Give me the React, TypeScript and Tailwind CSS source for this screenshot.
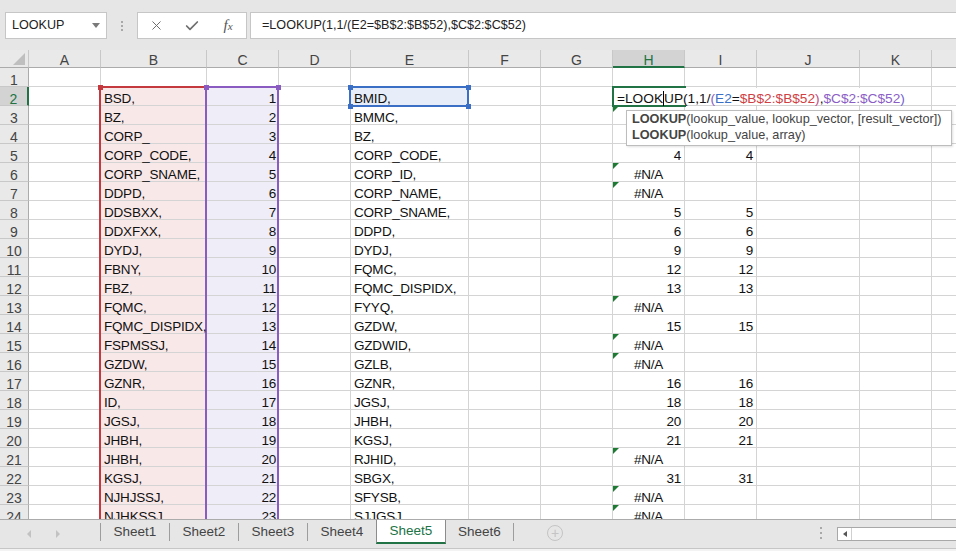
import { Check, X } from 'lucide-react';

const COLS = [
  { key: 'A', w: 'w-[72px]' },
  { key: 'B', w: 'w-[106px]' },
  { key: 'C', w: 'w-[72px]' },
  { key: 'D', w: 'w-[72px]' },
  { key: 'E', w: 'w-[118px]' },
  { key: 'F', w: 'w-[72px]' },
  { key: 'G', w: 'w-[72px]' },
  { key: 'H', w: 'w-[72px]' },
  { key: 'I', w: 'w-[72px]' },
  { key: 'J', w: 'w-[103px]' },
  { key: 'K', w: 'w-[72px]' },
  { key: 'L', w: 'w-[72px]' },
];

const COL_B = [
  'BSD,', 'BZ,', 'CORP_', 'CORP_CODE,', 'CORP_SNAME,', 'DDPD,', 'DDSBXX,', 'DDXFXX,', 'DYDJ,', 'FBNY,', 'FBZ,', 'FQMC,',
  'FQMC_DISPIDX,', 'FSPMSSJ,', 'GZDW,', 'GZNR,', 'ID,', 'JGSJ,', 'JHBH,', 'JHBH,', 'KGSJ,', 'NJHJSSJ,', 'NJHKSSJ,',
];

const COL_E = [
  'BMID,', 'BMMC,', 'BZ,', 'CORP_CODE,', 'CORP_ID,', 'CORP_NAME,', 'CORP_SNAME,', 'DDPD,', 'DYDJ,', 'FQMC,', 'FQMC_DISPIDX,',
  'FYYQ,', 'GZDW,', 'GZDWID,', 'GZLB,', 'GZNR,', 'JGSJ,', 'JHBH,', 'KGSJ,', 'RJHID,', 'SBGX,', 'SFYSB,', 'SJJGSJ,',
];

// index 0 = row 2 (the formula cell); null = #N/A
const COL_H: (number | null)[] = [
  0, null, 2, 4, null, null, 5, 6, 9, 12, 13, null, 15, null, null, 16, 18, 20, 21, null, 31, null, null,
];

const SHEETS = ['Sheet1', 'Sheet2', 'Sheet3', 'Sheet4', 'Sheet5', 'Sheet6'];

function FormulaText() {
  return (
    <>
      <span>=LOOK</span>
      <span className="inline-block h-[15px] w-0 border-l border-black align-[-3px]" />
      <span>UP(1,1/</span>
      <span className="text-[#8b5ec6]">(</span>
      <span className="text-[#3a6fc6]">E2</span>
      <span>=</span>
      <span className="text-[#cf3f45]">$B$2:$B$52</span>
      <span className="text-[#c04a86]">)</span>
      <span>,</span>
      <span className="text-[#8b5ec6]">$C$2:$C$52</span>
      <span className="text-[#6f5fd2]">)</span>
    </>
  );
}

function ColHeader() {
  return (
    <div className="flex h-[18px] shrink-0 bg-[#e9e9e9]">
      <div className="flex h-[18px] w-[29px] shrink-0 items-end justify-end border-r border-b border-r-[#c8c8c8] border-b-[#ababab] pr-[3px] pb-[2px]">
        <div className="h-0 w-0 border-b-[12px] border-l-[12px] border-b-[#bfbfbf] border-l-transparent" />
      </div>
      {COLS.map((c) => {
        const active = c.key === 'H';
        return (
          <div
            key={c.key}
            className={`${c.w} h-[18px] shrink-0 border-r border-r-[#c8c8c8] pt-[4px] text-center text-[14px] leading-[13px] ${
              active
                ? 'border-b-2 border-b-[#217346] bg-[#d3d3d3] text-[#217346]'
                : 'border-b border-b-[#ababab] text-[#444]'
            }`}
          >
            {c.key}
          </div>
        );
      })}
    </div>
  );
}

function ErrorMark() {
  return <div className="absolute top-0 left-0 h-0 w-0 border-t-[6px] border-r-[6px] border-t-[#1c7a32] border-r-transparent" />;
}

function Txt({ children }: { children: React.ReactNode }) {
  return <span className="relative z-[1]">{children}</span>;
}

function Row({ r }: { r: number }) {
  const i = r - 2;
  const hasData = r >= 2;
  const h = hasData ? COL_H[i] : undefined;
  const base = 'relative h-[19px] shrink-0 whitespace-nowrap border-r border-b border-[#d4d4d4] pt-[5px] text-[13.5px] leading-[13px] tracking-[-0.2px] text-[#111]';

  return (
    <div className="flex h-[19px] shrink-0">
      <div
        className={`h-[19px] w-[29px] shrink-0 border-b border-b-[#c8c8c8] pt-[6px] text-center text-[14px] leading-[13px] ${
          r === 2
            ? 'border-r-2 border-r-[#217346] bg-[#d3d3d3] text-[#217346]'
            : 'border-r border-r-[#ababab] bg-[#e9e9e9] text-[#444]'
        }`}
      >
        {r}
      </div>
      {COLS.map((c) => {
        if (!hasData) return <div key={c.key} className={`${c.w} ${base}`} />;
        if (c.key === 'B')
          return (
            <div key={c.key} className={`${c.w} ${base} bg-[#f9e8e8] pl-[3px]`}>
              <Txt>{COL_B[i]}</Txt>
            </div>
          );
        if (c.key === 'C')
          return (
            <div key={c.key} className={`${c.w} ${base} bg-[#efedf8] pr-[2px] text-right`}>
              <Txt>{r - 1}</Txt>
            </div>
          );
        if (c.key === 'E')
          return (
            <div key={c.key} className={`${c.w} ${base} pl-[3px] ${r === 2 ? 'bg-[#e8eef9]' : ''}`}>
              <Txt>{COL_E[i]}</Txt>
            </div>
          );
        if (c.key === 'H') {
          if (r === 2)
            return (
              <div key={c.key} className={`${c.w} ${base} z-10`}>
                <div className="absolute -top-[1px] -left-[1px] h-[21px] w-[74px] border-2 border-[#217346]" />
                <div className="absolute top-[1px] left-[2px] h-[17px] bg-white pt-[3px] pr-[6px] pl-[2px] text-[13.7px] leading-[13px] tracking-normal">
                  <FormulaText />
                </div>
              </div>
            );
          if (h === null)
            return (
              <div key={c.key} className={`${c.w} ${base} text-center`}>
                <ErrorMark />
                #N/A
              </div>
            );
          return (
            <div key={c.key} className={`${c.w} ${base} pr-[3px] text-right`}>
              {h}
            </div>
          );
        }
        if (c.key === 'I')
          return (
            <div key={c.key} className={`${c.w} ${base} pr-[3px] text-right`}>
              {r > 2 && h !== null ? h : ''}
            </div>
          );
        return <div key={c.key} className={`${c.w} ${base}`} />;
      })}
    </div>
  );
}

function RangeMarks() {
  return (
    <>
      {/* B2:B52 */}
      <div className="absolute top-[36px] left-[99px] h-[2px] w-[107px] bg-[#c4393d]" />
      <div className="absolute top-[36px] left-[99px] h-[440px] w-[2px] bg-[#c4393d]" />
      <div className="absolute top-[35px] left-[98px] h-[5px] w-[5px] bg-[#c4393d]" />
      {/* C2:C52 */}
      <div className="absolute top-[36px] left-[205px] h-[2px] w-[74px] bg-[#8a5cc2]" />
      <div className="absolute top-[36px] left-[205px] h-[440px] w-[2px] bg-[#8a5cc2]" />
      <div className="absolute top-[36px] left-[277px] h-[440px] w-[2px] bg-[#8a5cc2]" />
      <div className="absolute top-[35px] left-[204px] h-[5px] w-[5px] bg-[#8a5cc2]" />
      <div className="absolute top-[35px] left-[276px] h-[5px] w-[5px] bg-[#8a5cc2]" />
      {/* E2 */}
      <div className="absolute top-[36px] left-[349px] h-[21px] w-[120px] border-2 border-[#3b6fc6]" />
      <div className="absolute top-[35px] left-[348px] h-[5px] w-[5px] bg-[#3b6fc6]" />
      <div className="absolute top-[35px] left-[466px] h-[5px] w-[5px] bg-[#3b6fc6]" />
      <div className="absolute top-[54px] left-[348px] h-[5px] w-[5px] bg-[#3b6fc6]" />
      <div className="absolute top-[54px] left-[466px] h-[5px] w-[5px] bg-[#3b6fc6]" />
    </>
  );
}

function Tooltip() {
  return (
    <div className="absolute top-[60px] left-[626px] z-30 h-[36px] w-[326px] border border-[#bdbdbd] bg-white px-[5px] text-[12.7px] leading-[16px] text-[#444] shadow-[1px_1px_2px_rgba(0,0,0,0.12)]">
      <div className="whitespace-nowrap">
        <span className="font-bold">LOOKUP</span>(lookup_value, lookup_vector, [result_vector])
      </div>
      <div className="whitespace-nowrap">
        <span className="font-bold">LOOKUP</span>(lookup_value, array)
      </div>
    </div>
  );
}

function TopBar() {
  return (
    <div className="flex h-[50px] shrink-0 items-start bg-[#e6e6e6] pt-[12px] pl-[5px] text-[12.6px] text-[#222]">
      <div className="flex h-[27px] w-[102px] shrink-0 items-center justify-between border border-[#c6c6c6] bg-white pr-[6px] pl-[6px]">
        <span>LOOKUP</span>
        <span className="h-0 w-0 border-t-[5px] border-r-[4px] border-l-[4px] border-t-[#7a7a7a] border-r-transparent border-l-transparent" />
      </div>
      <div className="flex h-[27px] w-[30px] shrink-0 flex-col items-center justify-center gap-[2px]">
        <span className="h-[2px] w-[2px] bg-[#a8a8a8]" />
        <span className="h-[2px] w-[2px] bg-[#a8a8a8]" />
        <span className="h-[2px] w-[2px] bg-[#a8a8a8]" />
      </div>
      <div className="flex h-[27px] w-[110px] shrink-0 items-center border border-[#c6c6c6] bg-white">
        <div className="flex w-[37px] justify-center">
          <X size={15} strokeWidth={1.6} color="#6e6e6e" />
        </div>
        <div className="flex w-[37px] justify-center">
          <Check size={16} strokeWidth={2.6} color="#6e6e6e" />
        </div>
        <div className="flex w-[37px] justify-center">
          <span className="font-[family-name:'Liberation_Serif',serif] text-[15px] leading-none text-[#555] italic">
            f<span className="text-[11px]">x</span>
          </span>
        </div>
      </div>
      <div className="-mr-[2px] ml-[3px] flex h-[27px] flex-1 items-center border border-[#c6c6c6] bg-white pl-[11px]">
        =LOOKUP(1,1/(E2=$B$2:$B$52),$C$2:$C$52)
      </div>
    </div>
  );
}

function Sep() {
  return <div className="mt-[3px] h-[18px] w-px shrink-0 bg-[#9d9d9d]" />;
}

function TabBar() {
  return (
    <div className="flex h-[29px] shrink-0 items-start border-t border-[#ababab] bg-[#e6e6e6] text-[13.5px] text-[#444]">
      <div className="flex h-[28px] w-[100px] shrink-0 items-center pl-[27px]">
        <div className="h-0 w-0 border-t-[4px] border-r-[4px] border-b-[4px] border-t-transparent border-r-[#c2c2c2] border-b-transparent" />
        <div className="ml-[25px] h-0 w-0 border-t-[4px] border-b-[4px] border-l-[4px] border-t-transparent border-b-transparent border-l-[#c2c2c2]" />
      </div>
      {SHEETS.map((s, idx) => {
        if (s === 'Sheet5')
          return (
            <div
              key={s}
              className="flex h-[24px] w-[70px] shrink-0 items-center justify-center border-x border-b-2 border-x-[#8c8c8c] border-b-[#217346] bg-white pt-[1px] text-[#217346]"
            >
              {s}
            </div>
          );
        return (
          <div key={s} className="flex shrink-0 items-start">
            {idx !== 5 && idx !== 4 ? <Sep /> : null}
            <div className={`flex h-[24px] shrink-0 items-center justify-center pt-[1px] ${idx === 5 ? 'w-[67px]' : 'w-[68px]'}`}>{s}</div>
            {idx === 5 ? <Sep /> : null}
          </div>
        );
      })}
      <div className="mt-[5px] ml-[33px] flex h-[16px] w-[16px] shrink-0 items-center justify-center rounded-full border border-[#c4c4c4] text-[14px] leading-none text-[#c4c4c4]">
        +
      </div>
      <div className="flex-1" />
      <div className="mt-[7px] mr-[15px] flex shrink-0 flex-col gap-[3px]">
        <span className="h-[2px] w-[2px] bg-[#a8a8a8]" />
        <span className="h-[2px] w-[2px] bg-[#a8a8a8]" />
        <span className="h-[2px] w-[2px] bg-[#a8a8a8]" />
      </div>
      <div className="mt-[7px] -mr-[2px] flex h-[14px] w-[121px] shrink-0 border border-[#a8a8a8] bg-white">
        <div className="flex w-[14px] items-center justify-center border-r border-[#d0d0d0]">
          <div className="h-0 w-0 border-t-[3px] border-r-[4px] border-b-[3px] border-t-transparent border-r-[#555] border-b-transparent" />
        </div>
      </div>
    </div>
  );
}

export default function App() {
  const rows = Array.from({ length: 24 }, (_, k) => k + 1);
  return (
    <div className="flex h-[551px] w-[956px] flex-col overflow-hidden bg-white font-[family-name:'Liberation_Sans',Arial,sans-serif]">
      <TopBar />
      <div className="relative flex-1 overflow-hidden">
        <ColHeader />
        {rows.map((r) => (
          <Row key={r} r={r} />
        ))}
        <RangeMarks />
        <Tooltip />
      </div>
      <TabBar />
      <div className="h-[3px] shrink-0 border-t border-[#c6c6c6] bg-[#f3f3f3]" />
    </div>
  );
}
